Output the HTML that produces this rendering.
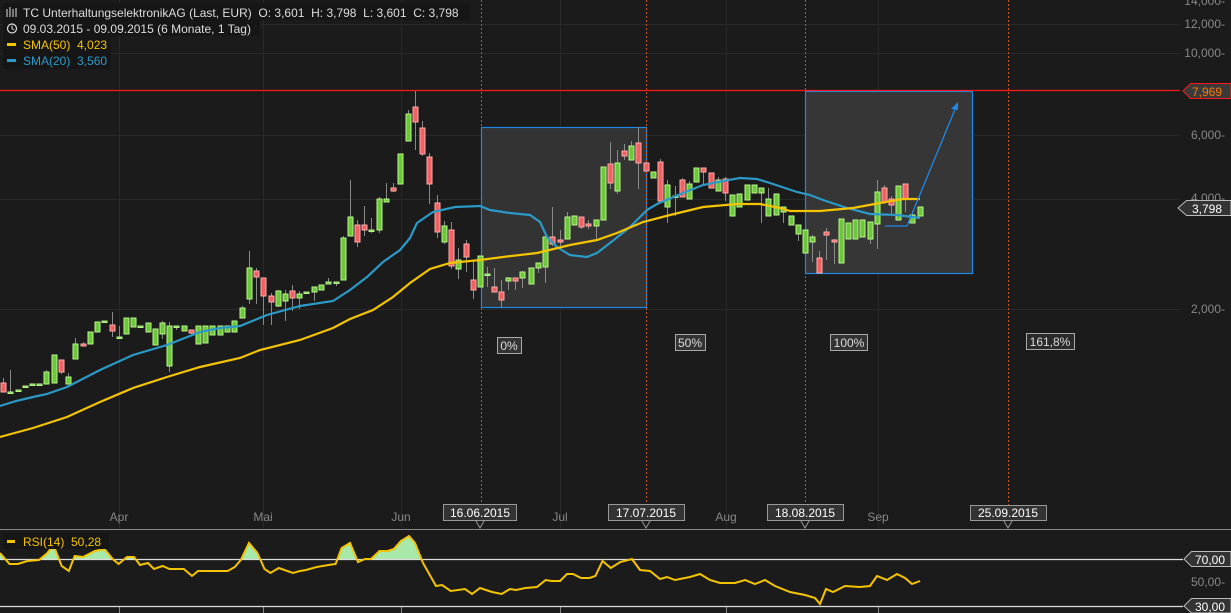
<!DOCTYPE html>
<html><head><meta charset="utf-8"><style>
html,body{margin:0;padding:0;background:#1c1b1b;width:1231px;height:613px;overflow:hidden}
svg{display:block;font-family:"Liberation Sans",sans-serif}
text{white-space:pre}
</style></head><body>
<svg id="s" width="1231" height="613" viewBox="0 0 1231 613" xmlns="http://www.w3.org/2000/svg">
<rect width="1231" height="613" fill="#1c1b1b"/>
<g stroke="#2a2929" stroke-width="1">
<line x1="0" y1="24.5" x2="1180" y2="24.5"/><line x1="0" y1="53.5" x2="1180" y2="53.5"/>
<line x1="0" y1="135.5" x2="1180" y2="135.5"/><line x1="0" y1="199.5" x2="1180" y2="199.5"/>
<line x1="0" y1="309.5" x2="1180" y2="309.5"/>
<line x1="119.5" y1="0" x2="119.5" y2="528"/><line x1="263.5" y1="0" x2="263.5" y2="528"/>
<line x1="401.5" y1="0" x2="401.5" y2="528"/><line x1="560.5" y1="0" x2="560.5" y2="528"/>
<line x1="726.5" y1="0" x2="726.5" y2="528"/><line x1="878.5" y1="0" x2="878.5" y2="528"/>
</g>
<rect x="481.5" y="127.5" width="165" height="180" fill="#333" stroke="#1e88e5" stroke-width="1.2"/>
<rect x="805.5" y="91.5" width="167" height="182" fill="#363636" stroke="#1e88e5" stroke-width="1.2"/>
<g stroke="#c4581a" stroke-width="1" stroke-dasharray="2,2">
<line x1="481.5" y1="0" x2="481.5" y2="505"/><line x1="646.5" y1="0" x2="646.5" y2="505"/>
<line x1="805.5" y1="0" x2="805.5" y2="505"/><line x1="1008.5" y1="0" x2="1008.5" y2="505"/>
</g>
<line x1="0" y1="90.5" x2="1180" y2="90.5" stroke="#ff1a1a" stroke-width="1.3"/>
<g id="c"></g>
<polyline fill="none" stroke="#2b9ac7" stroke-width="2.2" points="0,406 16,401 33,397 47,394 67,387 100,370 133,355 167,345 200,332 220,328 240,326 267,315 300,306 333,301 350,290 367,277 383,262 400,250 410,238 417,223 433,212 455,207 480,206 490,210 510,213 530,215 540,222 547,237 557,247 570,255 587,257 597,253 610,243 630,227 647,210 657,204 683,193 703,185 723,181 740,178 757,179 770,183 797,192 810,195 823,200 847,208 870,214 897,215 920,218"/>
<polyline fill="none" stroke="#f5c400" stroke-width="2.2" points="0,437 33,428 67,417 100,402 133,388 167,377 200,367 240,358 260,350 300,340 333,328 350,319 373,310 393,297 410,283 430,269 450,263 480,260 503,257 537,253 570,245 597,240 617,233 643,222 670,215 703,207 737,204 760,204 780,208 790,211 820,211 853,208 880,203 903,199 920,199"/>
<polyline fill="none" stroke="#1e88e5" stroke-width="1.3" points="885,226 907,226 956,107"/>
<path d="M958,102 L951,109 L958,110 Z" fill="#1e88e5"/>
<g font-size="12" fill="#ddd" text-anchor="middle">
<rect x="497.5" y="337.5" width="24" height="16" fill="#333" stroke="#aaa"/><text x="509" y="350">0%</text>
<rect x="675.5" y="334.5" width="30" height="16" fill="#333" stroke="#aaa"/><text x="690" y="347">50%</text>
<rect x="830.5" y="334.5" width="37" height="16" fill="#333" stroke="#aaa"/><text x="849" y="347">100%</text>
<rect x="1026.5" y="333.5" width="48" height="16" fill="#2a2a2a" stroke="#aaa"/><text x="1050" y="346">161,8%</text>
</g>
<g font-size="12" fill="#888" text-anchor="end">
<text x="1225" y="5">14,000-</text><text x="1225" y="28">12,000-</text><text x="1225" y="57">10,000-</text>
<text x="1225" y="139">6,000-</text><text x="1225" y="202">4,000-</text><text x="1225" y="313">2,000-</text>
</g>
<path d="M1190.5,83.5 L1231,83.5 L1231,98.5 L1190.5,98.5 L1183,91 Z" fill="#3a3a3a" stroke="#ff1a1a"/>
<text x="1192" y="96" font-size="12" fill="#ff7a00">7,969</text>
<path d="M1186.5,200.5 L1231,200.5 L1231,215.5 L1186.5,215.5 L1178,208 Z" fill="#333" stroke="#bbb"/>
<text x="1192" y="213" font-size="12" fill="#fff">3,798</text>
<g font-size="12" fill="#888" text-anchor="middle">
<text x="119" y="521">Apr</text><text x="263" y="521">Mai</text><text x="401" y="521">Jun</text>
<text x="560" y="521">Jul</text><text x="726" y="521">Aug</text><text x="878" y="521">Sep</text>
</g>
<g font-size="12" fill="#fff" text-anchor="middle" stroke-width="1">
<rect x="443.5" y="504.5" width="73" height="16" fill="#333" stroke="#999"/><text x="480" y="517">16.06.2015</text>
<rect x="608.5" y="504.5" width="76" height="16" fill="#333" stroke="#999"/><text x="646" y="517">17.07.2015</text>
<rect x="767.5" y="504.5" width="76" height="16" fill="#333" stroke="#999"/><text x="805" y="517">18.08.2015</text>
<rect x="970.5" y="505.5" width="76" height="15" fill="#333" stroke="#999"/><text x="1008" y="517">25.09.2015</text>
<path d="M476,521 L480,528 L484,521" fill="none" stroke="#999"/><path d="M642,521 L646,528 L650,521" fill="none" stroke="#999"/>
<path d="M801,521 L805,528 L809,521" fill="none" stroke="#999"/><path d="M1004,521 L1008,528 L1012,521" fill="none" stroke="#999"/>
</g>
<line x1="0" y1="529.5" x2="1231" y2="529.5" stroke="#888"/>
<g stroke="#888"><line x1="119.5" y1="606" x2="119.5" y2="613"/><line x1="263.5" y1="606" x2="263.5" y2="613"/><line x1="401.5" y1="606" x2="401.5" y2="613"/><line x1="560.5" y1="606" x2="560.5" y2="613"/><line x1="726.5" y1="606" x2="726.5" y2="613"/><line x1="878.5" y1="606" x2="878.5" y2="613"/></g>
<defs><clipPath id="top"><rect x="0" y="530" width="1231" height="29"/></clipPath></defs>
<polygon id="rf" fill="#a8e8a8" clip-path="url(#top)"/>
<line x1="0" y1="559.5" x2="1183" y2="559.5" stroke="#ddd" stroke-width="1.2"/>
<line x1="0" y1="606.5" x2="1183" y2="606.5" stroke="#ddd" stroke-width="1.2"/>
<polyline id="rl" fill="none" stroke="#f5c400" stroke-width="2"/>
<path d="M1191.5,551.5 L1231,551.5 L1231,566.5 L1191.5,566.5 L1184,559 Z" fill="#333" stroke="#bbb"/>
<text x="1195" y="564" font-size="12" fill="#fff">70,00</text>
<text x="1225" y="586" font-size="12" fill="#888" text-anchor="end">50,00-</text>
<path d="M1191.5,598.5 L1231,598.5 L1231,613 L1191.5,613 L1184,606 Z" fill="#333" stroke="#bbb"/>
<text x="1195" y="611" font-size="12" fill="#fff">30,00</text>
<rect x="3" y="533" width="106" height="16" fill="#161616"/>
<rect x="7" y="540" width="8" height="3" fill="#f5c400"/>
<text x="23" y="546" font-size="12" fill="#f5c400">RSI(14)  50,28</text>
<rect x="3" y="3" width="467" height="17" fill="#161616"/>
<rect x="3" y="20" width="257" height="16" fill="#161616"/>
<rect x="3" y="36" width="108" height="33" fill="#161616"/>
<g stroke="#ddd" stroke-width="1"><line x1="7" y1="9" x2="7" y2="17"/><line x1="10" y1="7" x2="10" y2="17"/><line x1="13" y1="9" x2="13" y2="17"/><line x1="16" y1="8" x2="16" y2="17"/></g>
<text x="23" y="17" font-size="12" fill="#ddd">TC UnterhaltungselektronikAG (Last, EUR)  O: 3,601  H: 3,798  L: 3,601  C: 3,798</text>
<circle cx="12" cy="28.5" r="4.5" fill="none" stroke="#ddd" stroke-width="1.2"/><path d="M12,25.5 L12,28.5 L14,30" fill="none" stroke="#ddd"/>
<text x="23" y="33" font-size="12" fill="#ddd">09.03.2015 - 09.09.2015 (6 Monate, 1 Tag)</text>
<rect x="7" y="43" width="9" height="3" fill="#f5c400"/><text x="23" y="49" font-size="12" fill="#f5c400">SMA(50)  4,023</text>
<rect x="7" y="59" width="9" height="3" fill="#2b9ac7"/><text x="23" y="65" font-size="12" fill="#2b9ac7">SMA(20)  3,560</text>
</svg>
<script>
var C=[[3,383,392,378,392],[10,392,392,370,392],[18,390,390,390,390],[25,386,386,386,386],[32,384,384,384,384],[39,384,384,384,384],[46,384,372,370,384],[54,383,355,355,383],[61,360,372,360,374],[68,384,377,373,384],[75,359,344,338,359],[83,344,346,342,346],[90,344,332,332,344],[97,332,322,322,332],[104,322,321,321,322],[112,325,331,312,337],[119,337,337,326,337],[126,334,318,318,334],[133,327,318,318,327],[140,326,326,326,326],[148,332,323,323,332],[155,345,329,329,345],[162,334,323,321,339],[169,366,326,322,372],[176,326,326,326,330],[184,331,326,326,331],[191,330,333,330,335],[198,344,326,326,344],[205,343,326,326,343],[212,335,326,326,335],[220,335,326,326,335],[227,332,326,326,332],[234,332,321,321,332],[242,318,308,306,318],[249,299,268,251,304],[256,271,277,268,304],[263,278,296,278,325],[271,296,302,293,325],[278,306,291,290,307],[285,301,294,290,321],[292,291,298,285,311],[299,298,294,291,309],[306,292,292,292,292],[314,292,287,287,301],[321,290,285,285,290],[328,284,282,278,284],[336,282,282,282,286],[343,280,238,236,280],[350,236,217,180,236],[357,225,242,220,247],[364,225,230,206,236],[371,230,230,218,233],[379,230,199,197,233],[386,202,199,183,202],[393,188,191,183,192],[400,184,154,154,184],[408,141,114,110,141],[415,107,122,91,150],[422,128,154,121,156],[429,157,184,153,204],[437,203,232,195,238],[444,242,226,221,244],[451,230,266,222,269],[458,269,260,248,279],[466,244,257,240,272],[473,280,290,261,299],[480,287,256,256,287],[487,274,274,267,287],[494,287,292,268,292],[501,292,300,280,308],[508,281,278,277,290],[515,278,281,278,290],[522,278,272,271,288],[531,284,268,268,284],[538,268,263,263,273],[545,267,237,235,283],[552,237,244,207,246],[560,240,242,230,246],[567,239,217,212,239],[574,225,216,216,225],[581,217,227,217,229],[588,224,226,220,229],[596,226,220,220,239],[603,220,167,167,220],[610,164,183,142,189],[617,191,163,150,194],[624,151,156,144,160],[631,160,146,141,160],[638,143,163,127,189],[646,163,171,163,171],[653,178,172,172,178],[660,162,201,159,201],[667,207,185,180,223],[675,196,196,186,216],[682,180,197,178,197],[689,199,184,181,199],[696,182,168,168,182],[703,168,172,168,184],[711,173,188,173,188],[718,191,180,177,191],[725,179,193,177,201],[732,216,195,195,216],[739,207,194,194,207],[747,200,185,185,200],[754,193,185,185,193],[761,193,188,188,223],[768,216,199,188,216],[776,215,194,194,215],[783,212,207,207,223],[791,225,216,216,225],[798,234,225,225,241],[805,253,230,230,253],[812,242,237,235,262],[819,258,273,251,273],[826,232,235,228,260],[834,240,242,239,264],[841,263,219,219,263],[848,239,223,223,239],[855,239,220,220,239],[862,237,220,220,237],[870,239,222,222,244],[877,224,192,180,249],[884,188,202,185,204],[891,199,205,196,215],[898,220,186,186,220],[905,184,199,184,212],[912,223,215,211,223],[920,216,207,207,216]];
var g=document.getElementById("c"),h="";
C.forEach(function(c){var x=c[0],o=c[1],cl=c[2],hi=c[3],lo=c[4];var up=cl<=o;var t=Math.min(o,cl),b=Math.max(o,cl);
h+='<line x1="'+(x+.5)+'" y1="'+hi+'" x2="'+(x+.5)+'" y2="'+lo+'" stroke="#8a8a8a" stroke-width="1"/>';
var hh=Math.max(b-t,1.5);
h+='<rect x="'+(x-2)+'" y="'+t+'" width="5" height="'+hh+'" fill="'+(up?'#6cc83a':'#f06262')+'" stroke="'+(up?'#b8f58a':'#ffaaaa')+'" stroke-width="1"/>';});
g.innerHTML=h;
var R="0,553 9.5,564 17.8,564 27.3,561 39,560 47.4,553 53.4,545 61.7,566 68.8,571 74.7,556 83,557 94.9,551 104.4,549 112.7,559 118.6,564 126.9,557 134,557 140,565 148,563 154,569 162.5,566 169.6,569 183.8,569 192,576 198,571 227.7,571 234.8,567 240.8,560 249,543 257.4,553 264.5,569 270.4,573 278.7,568 293,573 300,571 306,570 316.7,567 328.5,565 335.6,564 341.6,548 350,543 358,562 365,559 371,559 379.5,551 387.8,551 393.8,549 400.9,541 409,536 415,543 423,563 436,586 442,585 450.7,591 465,589 472,594 480,588 492,592 501.7,594 510,589 516,590 525.4,588 537,587 545.6,580 551.5,581 560,581 567,574 573,574 581,578 589.5,578 595.4,576 602.5,561 610.8,568 620.3,562 632,559 640,570 650,571 660,579 667,577 675,580 690,577 700,574 710,580 720,583 735,583 745,580 755,584 765,580 775,586 790,592 805,595 815,598 820,604 826,589 833,592 845,586 860,587 870,586 877,576 887,580 897,574 905,578 912,584 920,581";
document.getElementById("rl").setAttribute("points",R);
document.getElementById("rf").setAttribute("points","0,559 "+R+" 920,559");
</script>
</body></html>
